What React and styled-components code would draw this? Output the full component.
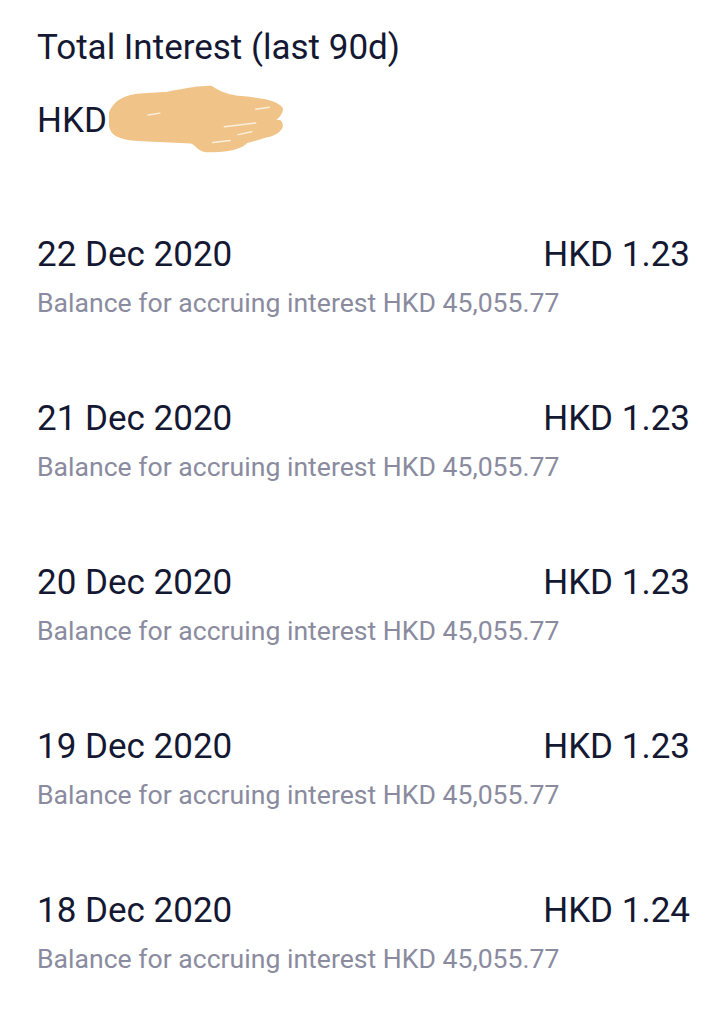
import React from 'react';
import styled, {createGlobalStyle} from 'styled-components';

const GlobalStyle = createGlobalStyle`
  html, body {
    margin: 0;
    padding: 0;
    background: #ffffff;
  }
  body {
    font-family: Roboto, "Noto Sans", sans-serif;
    -webkit-font-smoothing: antialiased;
  }
`;

const Page = styled.div`
  width: 726px;
  min-height: 1024px;
  background: #ffffff;
  box-sizing: border-box;
  padding: 26px 36px 0 37px;
  color: #141833;
`;

const Header = styled.div`
  display: flex;
  flex-direction: column;
  gap: 17px;
  margin-bottom: 78px;
`;

const Title = styled.div`
  font-size: 35px;
  line-height: 44px;
`;

const TotalRow = styled.div`
  display: flex;
  align-items: center;
  height: 68px;
  font-size: 35px;
  line-height: 44px;
`;

const Scribble = styled.svg`
  width: 176px;
  height: 68px;
  margin-left: 2px;
  margin-top: -4px;
`;

const List = styled.div`
  display: flex;
  flex-direction: column;
`;

const Item = styled.div`
  display: flex;
  flex-direction: column;
  height: 164px;
`;

const TopLine = styled.div`
  display: flex;
  justify-content: space-between;
  align-items: baseline;
  font-size: 35px;
  line-height: 44px;
`;

const Sub = styled.div`
  margin-top: 10px;
  font-size: 26.6px;
  line-height: 32px;
  color: #8a8b9f;
`;

const rows = [
  {date: '22 Dec 2020', amount: 'HKD 1.23'},
  {date: '21 Dec 2020', amount: 'HKD 1.23'},
  {date: '20 Dec 2020', amount: 'HKD 1.23'},
  {date: '19 Dec 2020', amount: 'HKD 1.23'},
  {date: '18 Dec 2020', amount: 'HKD 1.24'},
];

const App = () => (
  <>
    <GlobalStyle />
    <Page>
      <Header>
        <Title>Total Interest (last 90d)</Title>
        <TotalRow>
          HKD
          <Scribble viewBox="0 0 180 68">
            <path
              d="M5 24 C10 16 20 12 32 11 L60 9 C80 5 95 2 104 3 C110 7 116 11 130 13 C150 15 168 16 175 24 C174 30 168 34 160 36 L174 38 C177 43 170 48 160 50 L140 56 C134 62 124 65 100 65 C90 64 92 58 84 56 L40 54 C25 54 10 52 5 46 C1 38 1 30 5 24 Z"
              fill="#f0c488"
              stroke="#f0c488"
              strokeWidth="6"
              strokeLinejoin="round"
            />
            <g
              fill="none"
              stroke="#fbeedd"
              strokeWidth="1.5"
              strokeLinecap="round"
            >
              <path d="M118 42 L150 38" />
              <path d="M150 24 L164 22" />
              <path d="M106 58 L124 56" />
              <path d="M40 30 L52 28" />
              <path d="M132 50 L146 47" />
            </g>
          </Scribble>
        </TotalRow>
      </Header>
      <List>
        {rows.map((r, i) => (
          <Item key={i}>
            <TopLine>
              <span>{r.date}</span>
              <span>{r.amount}</span>
            </TopLine>
            <Sub>Balance for accruing interest HKD 45,055.77</Sub>
          </Item>
        ))}
      </List>
    </Page>
  </>
);

export default App;
